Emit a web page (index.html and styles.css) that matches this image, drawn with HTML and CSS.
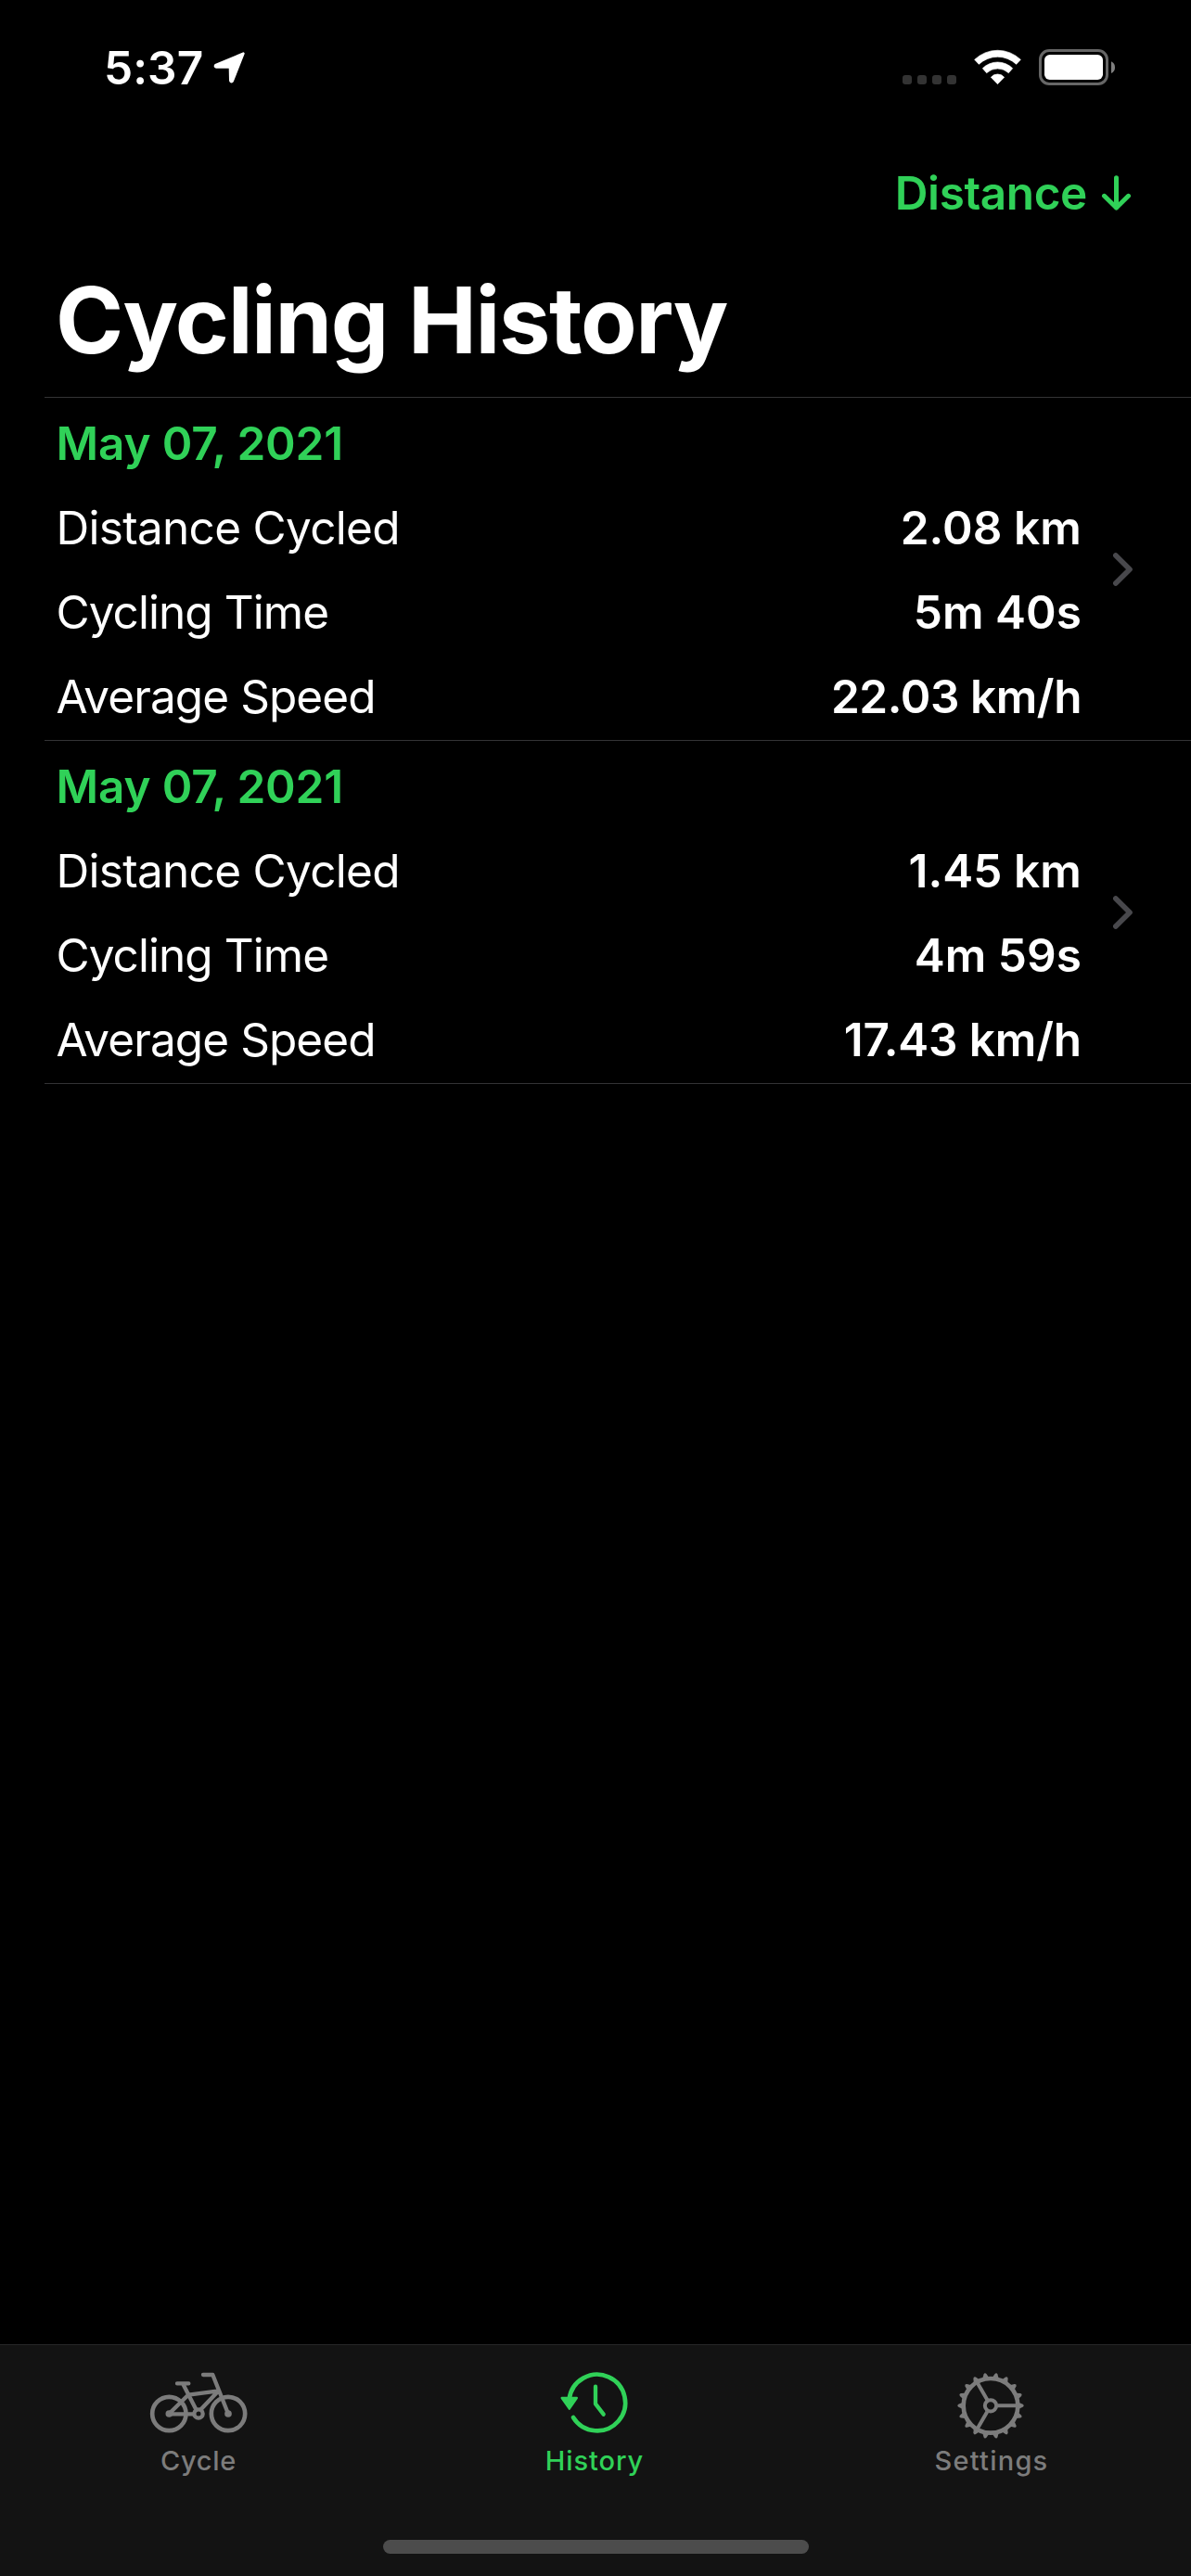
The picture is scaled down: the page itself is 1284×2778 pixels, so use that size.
FILE: index.html
```
<!DOCTYPE html>
<html lang="en">
<head>
<meta charset="utf-8">
<title>Cycling History</title>
<link rel="stylesheet" href="styles.css">
</head>
<body>
<div class="screen">
  <header class="status-bar">
    <div class="clock">
      <span class="clock-time">5:37</span>
      <svg class="location" width="36" height="36" viewBox="420 75 108 108"><path d="M517 83 L427 121 Q424 126 430 127 L474 127 L475 171 Q477 178 482 172 Z" fill="#fff" stroke="#fff" stroke-width="8" stroke-linejoin="round"/></svg>
    </div>
    <div class="indicators">
      <svg width="58" height="39" viewBox="99 69 174 117" fill="#333">
        <rect x="99" y="153" width="30" height="30" rx="9"/><rect x="147" y="153" width="30" height="30" rx="9"/><rect x="195" y="153" width="30" height="30" rx="9"/><rect x="243" y="153" width="30" height="30" rx="9"/>
      </svg>
      <svg width="51" height="39" viewBox="330 69 153 117" fill="#fff" stroke="#fff" stroke-width="2" stroke-linejoin="round">
        <path d="M332 103 A107 107 0 0 1 481 103 L467 118 A88 88 0 0 0 346 118 Z"/>
        <path d="M358 131 A69 69 0 0 1 455 131 L442 146 A52 52 0 0 0 371 146 Z"/>
        <path d="M385 160 A28 28 0 0 1 428 160 L406.500 182 Z"/>
      </svg>
      <svg width="82" height="39" viewBox="540 69 246 117">
        <rect x="544.500" y="73.500" width="216" height="108" rx="29" fill="none" stroke="#666" stroke-width="9"/>
        <rect x="558" y="87" width="189" height="81" rx="17" fill="#fff"/>
        <path d="M774 109 Q786 115 786 128 Q786 141 774 147 Z" fill="#808080"/>
      </svg>
    </div>
  </header>

  <nav class="nav-bar">
    <span class="sort">Distance</span>
    <svg width="33" height="42" viewBox="741 84 99 126" fill="none" stroke="#30d158" stroke-width="15" stroke-linecap="round" stroke-linejoin="round"><path d="M790.500 95 V192 M751.500 154 L790.500 192 L829.500 154"/></svg>
  </nav>

  <h1 class="title">Cycling History</h1>

  <main class="list">
    <section class="ride">
      <div class="ride-body">
        <div class="date">May 07, 2021</div>
        <div class="row"><span class="label label-distance">Distance Cycled</span><span class="value">2.08 km</span></div>
        <div class="row"><span class="label label-time">Cycling Time</span><span class="value value-time">5m 40s</span></div>
        <div class="row"><span class="label label-speed">Average Speed</span><span class="value value-speed">22.03 km/h</span></div>
      </div>
      <svg class="chevron" width="22" height="36" viewBox="1020 228 66 108" fill="none" stroke="#48484c" stroke-width="17" stroke-linecap="round" stroke-linejoin="round"><path d="M1028.500 237 L1074 282 L1028.500 327"/></svg>
    </section>
    <section class="ride">
      <div class="ride-body">
        <div class="date">May 07, 2021</div>
        <div class="row"><span class="label label-distance">Distance Cycled</span><span class="value">1.45 km</span></div>
        <div class="row"><span class="label label-time">Cycling Time</span><span class="value value-time">4m 59s</span></div>
        <div class="row"><span class="label label-speed">Average Speed</span><span class="value value-speed-narrow">17.43 km/h</span></div>
      </div>
      <svg class="chevron" width="22" height="36" viewBox="1020 228 66 108" fill="none" stroke="#48484c" stroke-width="17" stroke-linecap="round" stroke-linejoin="round"><path d="M1028.500 237 L1074 282 L1028.500 327"/></svg>
    </section>
  </main>

  <footer class="tab-bar">
    <div class="tabs">
      <div class="tab">
        <svg width="120" height="80" viewBox="42 129 360 240" fill="none" stroke="currentColor" stroke-width="13" stroke-linecap="round" stroke-linejoin="round">
          <circle cx="127" cy="279" r="54.500" stroke-width="14"/>
          <circle cx="318" cy="279" r="54.500" stroke-width="14"/>
          <circle cx="127" cy="279" r="11.500" fill="currentColor" stroke="none"/>
          <circle cx="318" cy="279" r="11.500" fill="currentColor" stroke="none"/>
          <circle cx="222" cy="279" r="14"/>
          <path d="M153 181 H190 M172 183 L215 267 M190 218 L287 205 L230 265 M127 279 L188 219 M127 280 H206 M237 153 H268 L318 279"/>
        </svg>
        <span class="tab-label tab-label-cycle">Cycle</span>
      </div>
      <div class="tab tab-active">
        <svg width="120" height="80" viewBox="63 129 360 240" fill="none" stroke="currentColor" stroke-width="14" stroke-linecap="round" stroke-linejoin="round">
          <path d="M161 232 A91 91 0 1 1 174 291"/>
          <path d="M137 228 H185.500 L161.500 263 Z" fill="currentColor" stroke-width="7"/>
          <path d="M246 191 V247 L272 281" stroke-width="13"/>
        </svg>
        <span class="tab-label tab-label-history">History</span>
      </div>
      <div class="tab">
        <svg width="120" height="80" viewBox="87 129 360 240" fill="none" stroke="currentColor">
          <defs>
            <path id="tooth" d="M354 242 L368 248.500 Q374 253 368 257.500 L354 264 Z" fill="currentColor" stroke="none"/>
            <g id="teeth">
              <use href="#tooth"/>
              <use href="#tooth" transform="rotate(20 264 253)"/>
              <use href="#tooth" transform="rotate(40 264 253)"/>
              <use href="#tooth" transform="rotate(60 264 253)"/>
              <use href="#tooth" transform="rotate(80 264 253)"/>
              <use href="#tooth" transform="rotate(100 264 253)"/>
            </g>
          </defs>
          <circle cx="264" cy="253" r="88" stroke-width="14"/>
          <use href="#teeth"/>
          <use href="#teeth" transform="rotate(120 264 253)"/>
          <use href="#teeth" transform="rotate(240 264 253)"/>
          <circle cx="264" cy="253" r="18.500" stroke-width="12"/>
          <path d="M286 253 H350 M253 234 L220 177 M253 272 L220 329" stroke-width="12"/>
        </svg>
        <span class="tab-label tab-label-settings">Settings</span>
      </div>
    </div>
    <div class="home-indicator"></div>
  </footer>
</div>
</body>
</html>
```
FILE: styles.css
```
* { box-sizing: border-box; }

body {
  margin: 0;
  background: #000;
  color: #fff;
  font-family: Inter, "Liberation Sans", sans-serif;
  font-size: 49.5px;
  line-height: 60px;
}

svg { display: block; flex: none; }

.screen {
  width: 1284px;
  height: 2778px;
  display: flex;
  flex-direction: column;
}

.status-bar {
  height: 178px;
  padding: 43px 82px 0 112px;
  display: flex;
  justify-content: space-between;
  align-items: flex-start;
}

.clock { display: flex; }
.clock-time { font-weight: 600; letter-spacing: 0.1px; }
.location { margin: 12px 0 0 11px; }

.indicators {
  display: flex;
  gap: 19px;
  padding-top: 10px;
}

.nav-bar {
  height: 107px;
  padding-right: 64px;
  display: flex;
  justify-content: flex-end;
  align-items: flex-start;
  gap: 15px;
  color: #30d158;
}
.nav-bar svg { margin-top: 10px; }
.sort { font-weight: 600; letter-spacing: -0.4px; }

.title {
  margin: 0;
  height: 143px;
  padding-left: 60px;
  font-size: 99px;
  font-weight: 700;
  line-height: 120px;
  letter-spacing: -1.4px;
}

.list {
  flex: 1;
  margin-left: 48px;
}

.ride {
  height: 370px;
  padding: 18px 62px 17px 12.5px;
  border-bottom: 1px solid #333335;
  display: flex;
  align-items: center;
  gap: 34px;
}
.ride:first-child {
  height: 371px;
  border-top: 1px solid #333335;
}

.ride-body {
  flex: 1;
  display: flex;
  flex-direction: column;
  gap: 31px;
}

.date {
  color: #30d158;
  font-weight: 600;
  letter-spacing: -0.15px;
}

.row {
  display: flex;
  justify-content: space-between;
}

.label-distance { letter-spacing: -0.7px; }
.label-time { letter-spacing: -0.95px; }
.label-speed { letter-spacing: -0.93px; }

.value { font-weight: 600; letter-spacing: 0.08px; }
.value-time { letter-spacing: 0.05px; }
.value-speed { letter-spacing: -0.45px; }
.value-speed-narrow { letter-spacing: -0.15px; }

.tab-bar {
  height: 250px;
  border-top: 1px solid #272728;
  background: #131313;
  color: #7c7c7c;
}

.tabs {
  height: 210px;
  padding-top: 24px;
  display: grid;
  grid-template-columns: 428px 426px 430px;
}

.tab {
  display: flex;
  flex-direction: column;
  align-items: center;
}
.tab-active { color: #30d158; }

.tab-label {
  margin-top: 3px;
  font-size: 29px;
  font-weight: 500;
  line-height: 36px;
}
.tab-label-cycle { letter-spacing: 0.7px; }
.tab-label-history { letter-spacing: 0.9px; }
.tab-label-settings { letter-spacing: 1.23px; }

.home-indicator {
  width: 459px;
  height: 15px;
  margin-left: 413px;
  border-radius: 8px;
  background: #4c4c4c;
}
```
